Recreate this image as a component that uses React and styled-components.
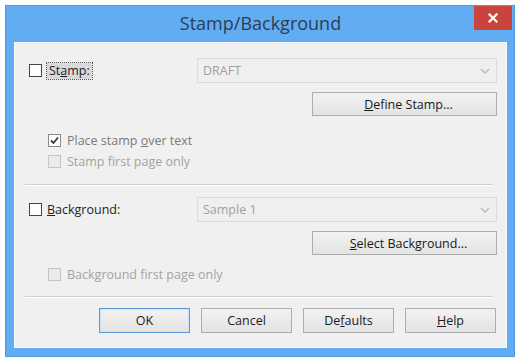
import React from 'react'
import styled, { createGlobalStyle } from 'styled-components'

const Global = createGlobalStyle`
  html, body { margin: 0; padding: 0; background: #ffffff; }
  body { font-family: "Open Sans", "Liberation Sans", sans-serif; font-size: 12.5px; }
`;

const Chevron = () => (
  <svg width="10" height="6" viewBox="0 0 10 6">
    <path d="M1 1 L5 5 L9 1" fill="none" stroke="#b9b9b9" strokeWidth="1.4" />
  </svg>
);

const Tick = () => (
  <svg width="11" height="11" viewBox="0 0 11 11">
    <path d="M2 5.5 L4.5 8 L9 2.5" fill="none" stroke="#3a3a3a" strokeWidth="1.8" />
  </svg>
);

const CloseX = () => (
  <svg width="10" height="10" viewBox="0 0 10 10">
    <path d="M1.5 1.5 L8.5 8.5 M8.5 1.5 L1.5 8.5" stroke="#ffffff" strokeWidth="2.2" strokeLinecap="square" />
  </svg>
);

const App = () => {
  return (
    <>
      <Global />
      <Window>
        <TitleBar>
          <Title>Stamp/Background</Title>
          <CloseButton><CloseX /></CloseButton>
        </TitleBar>
        <Client>
          <MainRow>
            <CheckLabel>
              <Box />
              <FocusText>St<Key>a</Key>mp:</FocusText>
            </CheckLabel>
            <Combo>
              <ComboText>DRAFT</ComboText>
              <Chevron />
            </Combo>
          </MainRow>
          <ButtonRow>
            <WideButton><Key>D</Key>efine Stamp...</WideButton>
          </ButtonRow>
          <Options>
            <Option tone="#7a7a7a">
              <Box checked><Tick /></Box>
              <OptionText>Place stamp <Key>o</Key>ver text</OptionText>
            </Option>
            <Option tone="#a3a3a3">
              <Box disabled />
              <OptionText>Stamp f<Key>i</Key>rst page only</OptionText>
            </Option>
          </Options>
          <Separator />
          <MainRow second>
            <CheckLabel>
              <Box />
              <PlainText><Key>B</Key>ackground:</PlainText>
            </CheckLabel>
            <Combo>
              <ComboText>Sample 1</ComboText>
              <Chevron />
            </Combo>
          </MainRow>
          <ButtonRow>
            <WideButton><Key>S</Key>elect Background...</WideButton>
          </ButtonRow>
          <Options single>
            <Option tone="#a3a3a3">
              <Box disabled />
              <OptionText>Back<Key>g</Key>round first page only</OptionText>
            </Option>
          </Options>
          <Separator bottom />
          <Footer>
            <DialogButton primary>OK</DialogButton>
            <DialogButton>Cancel</DialogButton>
            <DialogButton>De<Key>f</Key>aults</DialogButton>
            <DialogButton><Key>H</Key>elp</DialogButton>
          </Footer>
        </Client>
      </Window>
    </>
  )
}

const Window = styled.div`
  margin: 5px 0 0 5px;
  width: 510px;
  height: 352px;
  box-sizing: border-box;
  background: #62adf1;
  border: 1px solid #4f9be0;
  padding: 0 7px 8px 8px;
  display: flex;
  flex-direction: column;
`;

const TitleBar = styled.div`
  height: 36px;
  position: relative;
  display: flex;
  justify-content: center;
  align-items: flex-start;
`;

const Title = styled.div`
  font-size: 18px;
  line-height: 18px;
  margin-top: 8px;
  color: #2d3d55;
`;

const CloseButton = styled.div`
  position: absolute;
  top: 0;
  right: -5px;
  width: 38px;
  height: 24px;
  background: #c9443c;
  display: flex;
  align-items: center;
  justify-content: center;
`;

const Client = styled.div`
  flex: 1;
  background: #f0f0f0;
  border: 1px solid #fbfbfb;
  padding: 15px 9px 0 14px;
  display: flex;
  flex-direction: column;
  font-size: 12.5px;
  color: #1e1e1e;
`;

const Key = styled.span`
  text-decoration: underline;
  font-size: 12.5px;
`;

const MainRow = styled.div`
  display: flex;
  align-items: center;
  height: 25px;
  margin-top: ${p => (p.second ? '11px' : '0')};
`;

const CheckLabel = styled.div`
  width: 168px;
  display: flex;
  align-items: center;
  gap: 5px;
`;

const Box = styled.div`
  width: 13px;
  height: 13px;
  flex: none;
  box-sizing: border-box;
  border: 1px solid ${p => (p.disabled ? '#c4c4c4' : p.checked ? '#8a8a8a' : '#444')};
  background: ${p => (p.disabled ? '#eaeaea' : '#ffffff')};
  display: flex;
  align-items: center;
  justify-content: center;
`;

const FocusText = styled.div`
  background: #d9d9d9;
  outline: 1px dotted #555;
  padding: 1px 2px;
  font-size: 12.5px;
  line-height: 14px;
`;

const PlainText = styled.div`
  font-size: 12.5px;
  line-height: 14px;
`;

const Combo = styled.div`
  flex: 1;
  height: 25px;
  box-sizing: border-box;
  border: 1px solid #dcdcdc;
  background: #efefef;
  display: flex;
  align-items: center;
  justify-content: space-between;
  padding: 0 6px 0 5px;
  color: #a0a0a0;
`;

const ComboText = styled.div`
  font-size: 12.5px;
  line-height: 16px;
`;

const ButtonRow = styled.div`
  display: flex;
  justify-content: flex-end;
  margin-top: 9px;
`;

const ButtonBase = styled.div`
  height: 24px;
  box-sizing: border-box;
  border: 1px solid #adadad;
  background: linear-gradient(#f2f2f2, #e3e3e3);
  display: flex;
  align-items: center;
  justify-content: center;
  color: #1a1a1a;
  font-size: 12.5px;
  white-space: pre;
`;

const WideButton = styled(ButtonBase)`
  width: 185px;
  padding-left: 8px;
`;

const Options = styled.div`
  display: flex;
  flex-direction: column;
  gap: 2px;
  margin-top: ${p => (p.single ? '10px' : '15px')};
  padding-left: 19px;
`;

const Option = styled.div`
  height: 19px;
  display: flex;
  align-items: center;
  gap: 6px;
  color: ${p => p.tone};
`;

const OptionText = styled.div`
  font-size: 12.5px;
  line-height: 16px;
`;

const Separator = styled.div`
  margin: ${p => (p.bottom ? '12px' : '13px')} 4px 0 -4px;
  border-top: 1px solid #cfcfcf;
  border-bottom: 1px solid #ffffff;
`;

const Footer = styled.div`
  display: flex;
  justify-content: flex-end;
  gap: 11px;
  margin-top: 10px;
  padding-right: 1px;
`;

const DialogButton = styled(ButtonBase)`
  width: 91px;
  height: 25px;
  border-color: ${p => (p.primary ? '#5a9ad8' : '#adadad')};
  box-shadow: ${p => (p.primary ? 'inset 0 0 0 1px #cfe3f7' : 'none')};
`;

export default App
